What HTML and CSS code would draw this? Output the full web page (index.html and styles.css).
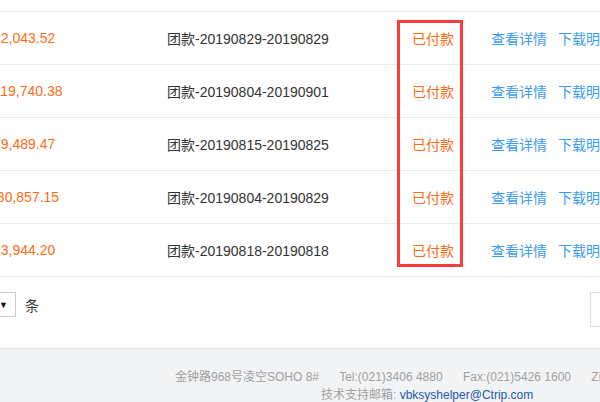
FILE: index.html
```html
<!DOCTYPE html>
<html lang="zh-CN">
<head>
    <meta charset="UTF-8" />
    <title>结算单列表</title>
    <link rel="stylesheet" href="styles.css">
</head>
<body>

<section class="settle-list">
    <div class="settle-row">
        <div class="col-amount">2,043.52</div>
        <div class="col-desc">团款-20190829-20190829</div>
        <div class="col-status">已付款</div>
        <div class="col-ops"><a href="#">查看详情</a><a href="#">下载明细</a></div>
    </div>
    <div class="settle-row">
        <div class="col-amount">119,740.38</div>
        <div class="col-desc">团款-20190804-20190901</div>
        <div class="col-status">已付款</div>
        <div class="col-ops"><a href="#">查看详情</a><a href="#">下载明细</a></div>
    </div>
    <div class="settle-row">
        <div class="col-amount">9,489.47</div>
        <div class="col-desc">团款-20190815-20190825</div>
        <div class="col-status">已付款</div>
        <div class="col-ops"><a href="#">查看详情</a><a href="#">下载明细</a></div>
    </div>
    <div class="settle-row">
        <div class="col-amount">80,857.15</div>
        <div class="col-desc">团款-20190804-20190829</div>
        <div class="col-status">已付款</div>
        <div class="col-ops"><a href="#">查看详情</a><a href="#">下载明细</a></div>
    </div>
    <div class="settle-row">
        <div class="col-amount">3,944.20</div>
        <div class="col-desc">团款-20190818-20190818</div>
        <div class="col-status">已付款</div>
        <div class="col-ops"><a href="#">查看详情</a><a href="#">下载明细</a></div>
    </div>

    <!-- 标注框 -->
    <div class="mark-box"></div>
</section>

<div class="pager">
    <div class="page-size">
        <span class="select-box"><span class="select-arrow">▼</span></span>
        <span class="unit">条</span>
    </div>
    <div class="page-jump"></div>
</div>

<footer>
    <p class="addr">
        <span>金钟路968号凌空SOHO 8#</span>
        <span>Tel:(021)3406 4880</span>
        <span>Fax:(021)5426 1600</span>
        <span>Zip:200335</span>
    </p>
    <p class="mail">技术支持邮箱: <a href="#">vbksyshelper@Ctrip.com</a></p>
</footer>

</body>
</html>
```

FILE: styles.css
```css
:root {
    --orange: #ff6a14;
    --blue: #3b9cef;
    --text: #333;
    --line: #ececec;
    --mark: #ff3b3b;
}

* {
    box-sizing: border-box;
    margin: 0;
    padding: 0;
}

body {
    font-family: 'Liberation Sans', 'Noto Sans CJK SC', sans-serif;
    font-size: 14px;
    color: var(--text);
    background: #fff;
    width: 600px;
    height: 402px;
    overflow: hidden;
}

a {
    text-decoration: none;
}

/* 列表 */
.settle-list {
    position: relative;
    width: 900px;
    margin: 11px 0 0 -32px;
    border-top: 1px solid var(--line);
}

.settle-row {
    display: flex;
    align-items: center;
    height: 53px;
    border-bottom: 1px solid var(--line);
}

.col-amount {
    width: 120px;
    text-align: center;
    color: var(--orange);
}

.col-desc {
    width: 292px;
    padding-left: 79px;
}

.col-status {
    width: 106px;
    text-align: center;
    color: var(--orange);
}

.col-ops {
    padding-left: 5px;
    display: flex;
    gap: 11px;
}

.col-ops a {
    color: var(--blue);
}

.mark-box {
    position: absolute;
    left: 429px;
    top: 8px;
    width: 66px;
    height: 247px;
    border: 3px solid var(--mark);
}

/* 分页 */
.pager {
    display: flex;
    justify-content: space-between;
    align-items: flex-start;
    height: 71px;
    padding-top: 15px;
}

.page-size {
    display: flex;
    align-items: center;
    height: 25px;
}

.select-box {
    display: flex;
    align-items: center;
    justify-content: flex-end;
    width: 40px;
    height: 25px;
    margin-left: -24px;
    padding-right: 7px;
    border: 1px solid #ccc;
}

.select-arrow {
    font-size: 9px;
    color: #111;
}

.unit {
    margin-left: 9px;
}

.page-jump {
    width: 40px;
    height: 35px;
    margin-right: -30px;
    border: 1px solid #ddd;
}

/* 页脚 */
footer {
    background: #f2f3f5;
    border-top: 1px solid #e2e2e2;
    padding-top: 19px;
    font-size: 12px;
    line-height: 18px;
    color: #a0a0a0;
    white-space: nowrap;
}

.addr {
    padding-left: 175px;
}

.addr span {
    margin-right: 17px;
}

.mail {
    padding-left: 321px;
}

.mail a {
    color: #2457a8;
}
```
